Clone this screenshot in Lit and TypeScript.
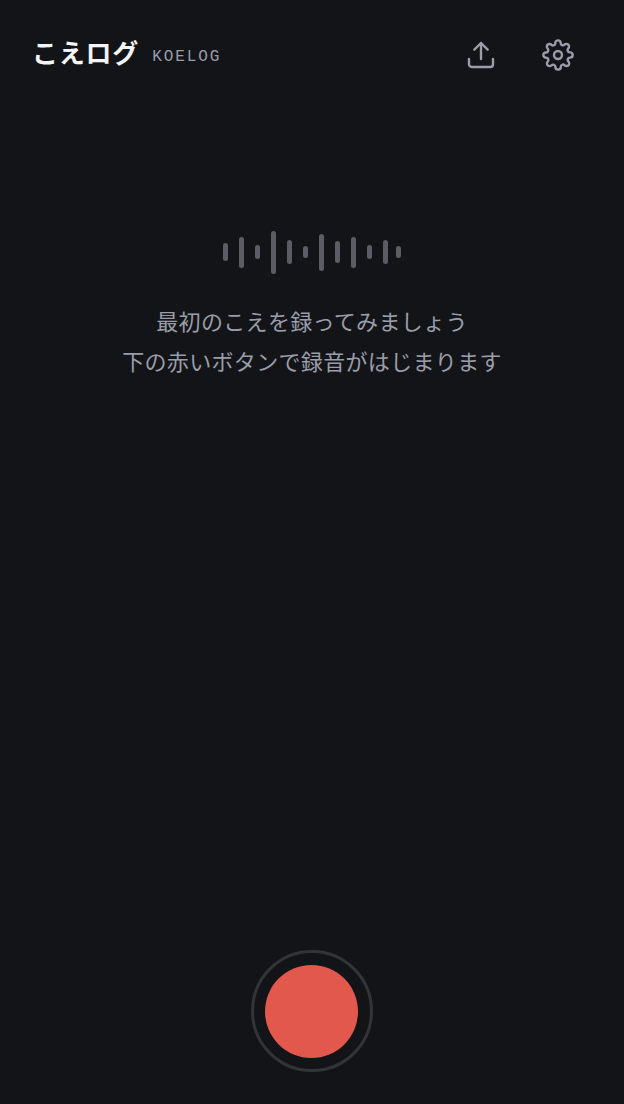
import { LitElement, html, css } from "lit";
import { customElement } from "lit/decorators.js";

const BARS = [18, 31, 14, 43, 24, 12, 37, 22, 31, 14, 24, 12];

@customElement("app-root")
export class AppRoot extends LitElement {
  static styles = css`
    :host {
      display: flex;
      flex-direction: column;
      height: 1104px;
      width: 624px;
      background: #131418;
      font-family: "Noto Sans CJK JP", "Noto Sans", sans-serif;
      overflow: hidden;
    }
    .top {
      display: flex;
      align-items: center;
      height: 110px;
      padding: 0 38px 0 32px;
      box-sizing: border-box;
      flex: none;
    }
    .brand {
      display: flex;
      align-items: flex-start;
      gap: 13px;
      flex: 1;
      margin-top: -7px;
    }
    h1 {
      margin: 0;
      font-size: 26px;
      font-weight: 700;
      letter-spacing: 0.78px;
      color: #f4f5f7;
      line-height: 1;
    }
    .latin {
      font-family: "Liberation Mono", monospace;
      font-size: 16px;
      line-height: 1;
      letter-spacing: 1.92px;
      color: #9a9da9;
      margin-top: 10px;
    }
    .actions {
      display: flex;
      gap: 21px;
    }
    .iconbtn {
      width: 56px;
      height: 56px;
      display: flex;
      align-items: center;
      justify-content: center;
      border: 0;
      padding: 0;
      background: none;
      color: #9a9da9;
    }
    .iconbtn svg {
      width: 32px;
      height: 32px;
    }
    main {
      flex: 1;
      display: flex;
      flex-direction: column;
      align-items: center;
      padding-top: 120px;
    }
    .wave {
      display: flex;
      align-items: center;
      height: 44px;
      width: 178px;
      gap: 11px;
    }
    .wave i {
      display: block;
      width: 5px;
      flex: none;
      border-radius: 3px;
      background: #5b5d64;
    }
    .wave i:last-child {
      margin-left: -3px;
    }
    p {
      margin: 26px 0 0;
      text-align: center;
      font-size: 22px;
      letter-spacing: 0.33px;
      line-height: 40px;
      color: #9a9da9;
    }
    footer {
      flex: none;
      display: flex;
      justify-content: center;
      padding-bottom: 32px;
    }
    .rec {
      width: 122px;
      height: 122px;
      box-sizing: border-box;
      border: 3px solid #33343a;
      border-radius: 50%;
      background: none;
      padding: 0;
      display: flex;
      align-items: center;
      justify-content: center;
    }
    .rec span {
      display: block;
      width: 93px;
      height: 93px;
      margin-right: 1px;
      border-radius: 50%;
      background: #e3584d;
    }
  `;

  render() {
    return html`
      <header class="top">
        <div class="brand">
          <h1>こえログ</h1>
          <span class="latin">KOELOG</span>
        </div>
        <div class="actions">
          <button class="iconbtn" aria-label="書き出し">
            <svg viewBox="0 0 24 24" fill="none" stroke="currentColor" stroke-width="1.8" stroke-linecap="round" stroke-linejoin="round">
              <path d="M21 15v4a2 2 0 0 1-2 2H5a2 2 0 0 1-2-2v-4" />
              <polyline points="17 8 12 3 7 8" />
              <line x1="12" y1="3" x2="12" y2="15" />
            </svg>
          </button>
          <button class="iconbtn" aria-label="設定">
            <svg viewBox="0 0 24 24" fill="none" stroke="currentColor" stroke-width="1.8" stroke-linecap="round" stroke-linejoin="round">
              <circle cx="12" cy="12" r="3" />
              <path d="M19.4 15a1.65 1.65 0 0 0 .33 1.82l.06.06a2 2 0 0 1 0 2.83 2 2 0 0 1-2.83 0l-.06-.06a1.65 1.65 0 0 0-1.82-.33 1.65 1.65 0 0 0-1 1.51V21a2 2 0 0 1-2 2 2 2 0 0 1-2-2v-.09A1.65 1.65 0 0 0 9 19.4a1.65 1.65 0 0 0-1.82.33l-.06.06a2 2 0 0 1-2.83 0 2 2 0 0 1 0-2.83l.06-.06a1.65 1.65 0 0 0 .33-1.82 1.65 1.65 0 0 0-1.51-1H3a2 2 0 0 1-2-2 2 2 0 0 1 2-2h.09A1.65 1.65 0 0 0 4.6 9a1.65 1.65 0 0 0-.33-1.82l-.06-.06a2 2 0 0 1 0-2.83 2 2 0 0 1 2.83 0l.06.06a1.65 1.65 0 0 0 1.82.33H9a1.65 1.65 0 0 0 1-1.51V3a2 2 0 0 1 2-2 2 2 0 0 1 2 2v.09a1.65 1.65 0 0 0 1 1.51 1.65 1.65 0 0 0 1.82-.33l.06-.06a2 2 0 0 1 2.83 0 2 2 0 0 1 0 2.83l-.06.06a1.65 1.65 0 0 0-.33 1.82V9a1.65 1.65 0 0 0 1.51 1H21a2 2 0 0 1 2 2 2 2 0 0 1-2 2h-.09a1.65 1.65 0 0 0-1.51 1z" />
            </svg>
          </button>
        </div>
      </header>
      <main>
        <div class="wave">
          ${BARS.map((h) => html`<i style="height:${h}px"></i>`)}
        </div>
        <p>最初のこえを録ってみましょう<br />下の赤いボタンで録音がはじまります</p>
      </main>
      <footer>
        <button class="rec" aria-label="録音"><span></span></button>
      </footer>
    `;
  }
}
